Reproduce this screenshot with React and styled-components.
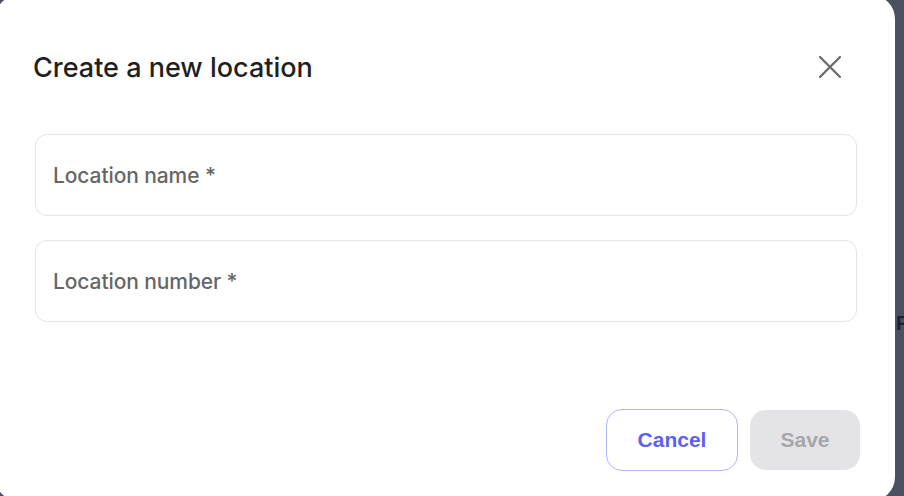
import React from "react";
import styled, { createGlobalStyle } from "styled-components";

const Global = createGlobalStyle`
  html, body { margin: 0; padding: 0; }
  body { background: #4b5161; overflow: hidden; font-family: Inter, "Noto Sans", sans-serif; }
`;

const Backdrop = styled.div`
  position: relative;
  width: 904px;
  height: 496px;
  overflow: hidden;
  background: #4b5161;
`;

const PageBehind = styled.span`
  position: absolute;
  left: 896px;
  top: 312px;
  font: 600 20px "Liberation Sans", Arial, sans-serif;
  color: #1c2230;
`;

const Modal = styled.div`
  position: relative;
  margin: -5px 0 0 -5px;
  width: 900px;
  height: 506px;
  box-sizing: border-box;
  background: #ffffff;
  border-radius: 24px;
  padding: 52px 38px 0 40px;
  display: flex;
  flex-direction: column;
`;

const Header = styled.div`
  height: 40px;
  display: flex;
  align-items: center;
  justify-content: space-between;
  margin-left: -2px;
`;

const Title = styled.h2`
  margin: 0;
  font-family: Inter, sans-serif;
  font-size: 27px;
  font-weight: 500;
  letter-spacing: 0px;
  color: #1f1f1f;
`;

const CloseButton = styled.button`
  border: 0;
  background: none;
  padding: 0;
  margin-right: 15px;
  width: 24px;
  height: 24px;
  display: flex;
  align-items: center;
  justify-content: center;
  color: #6b6b6b;
  cursor: pointer;
`;

const Fields = styled.div`
  margin-top: 47px;
  display: flex;
  flex-direction: column;
  gap: 24px;
`;

const Field = styled.label`
  height: 82px;
  box-sizing: border-box;
  border: 1px solid #e4e4e6;
  border-radius: 12px;
  display: flex;
  align-items: center;
  padding-left: 17px;
  font-family: Inter, sans-serif;
  font-size: 21px;
  font-weight: 500;
  color: #666666;
  letter-spacing: -0.1px;
`;

const Footer = styled.div`
  margin-top: 87px;
  margin-right: -3px;
  display: flex;
  justify-content: flex-end;
  align-items: center;
  gap: 12px;
`;

const Button = styled.button`
  box-sizing: border-box;
  height: ${(p) => (p.$variant === "outline" ? "62px" : "60px")};
  width: ${(p) => p.$w}px;
  border-radius: 16px;
  font-family: "Liberation Sans", Arial, sans-serif;
  font-weight: 700;
  font-size: 21px;
  cursor: pointer;
  border: ${(p) => (p.$variant === "outline" ? "1px solid #b3b3f7" : "0")};
  background: ${(p) => (p.$variant === "outline" ? "#ffffff" : "#e4e4e7")};
  color: ${(p) => (p.$variant === "outline" ? "#5f5ff0" : "#a6a6ab")};
`;

export default function App() {
  return (
    <>
      <Global />
      <Backdrop>
        <PageBehind>F</PageBehind>
        <Modal>
          <Header>
            <Title>Create a new location</Title>
            <CloseButton aria-label="Close">
              <svg width="22" height="22" viewBox="0 0 22 22" fill="none">
                <path d="M1 1L21 21M21 1L1 21" stroke="currentColor" strokeWidth="2.3" strokeLinecap="round" />
              </svg>
            </CloseButton>
          </Header>
          <Fields>
            <Field>Location name *</Field>
            <Field>Location number *</Field>
          </Fields>
          <Footer>
            <Button $variant="outline" $w={132}>Cancel</Button>
            <Button $variant="solid" $w={110}>Save</Button>
          </Footer>
        </Modal>
      </Backdrop>
    </>
  );
}
